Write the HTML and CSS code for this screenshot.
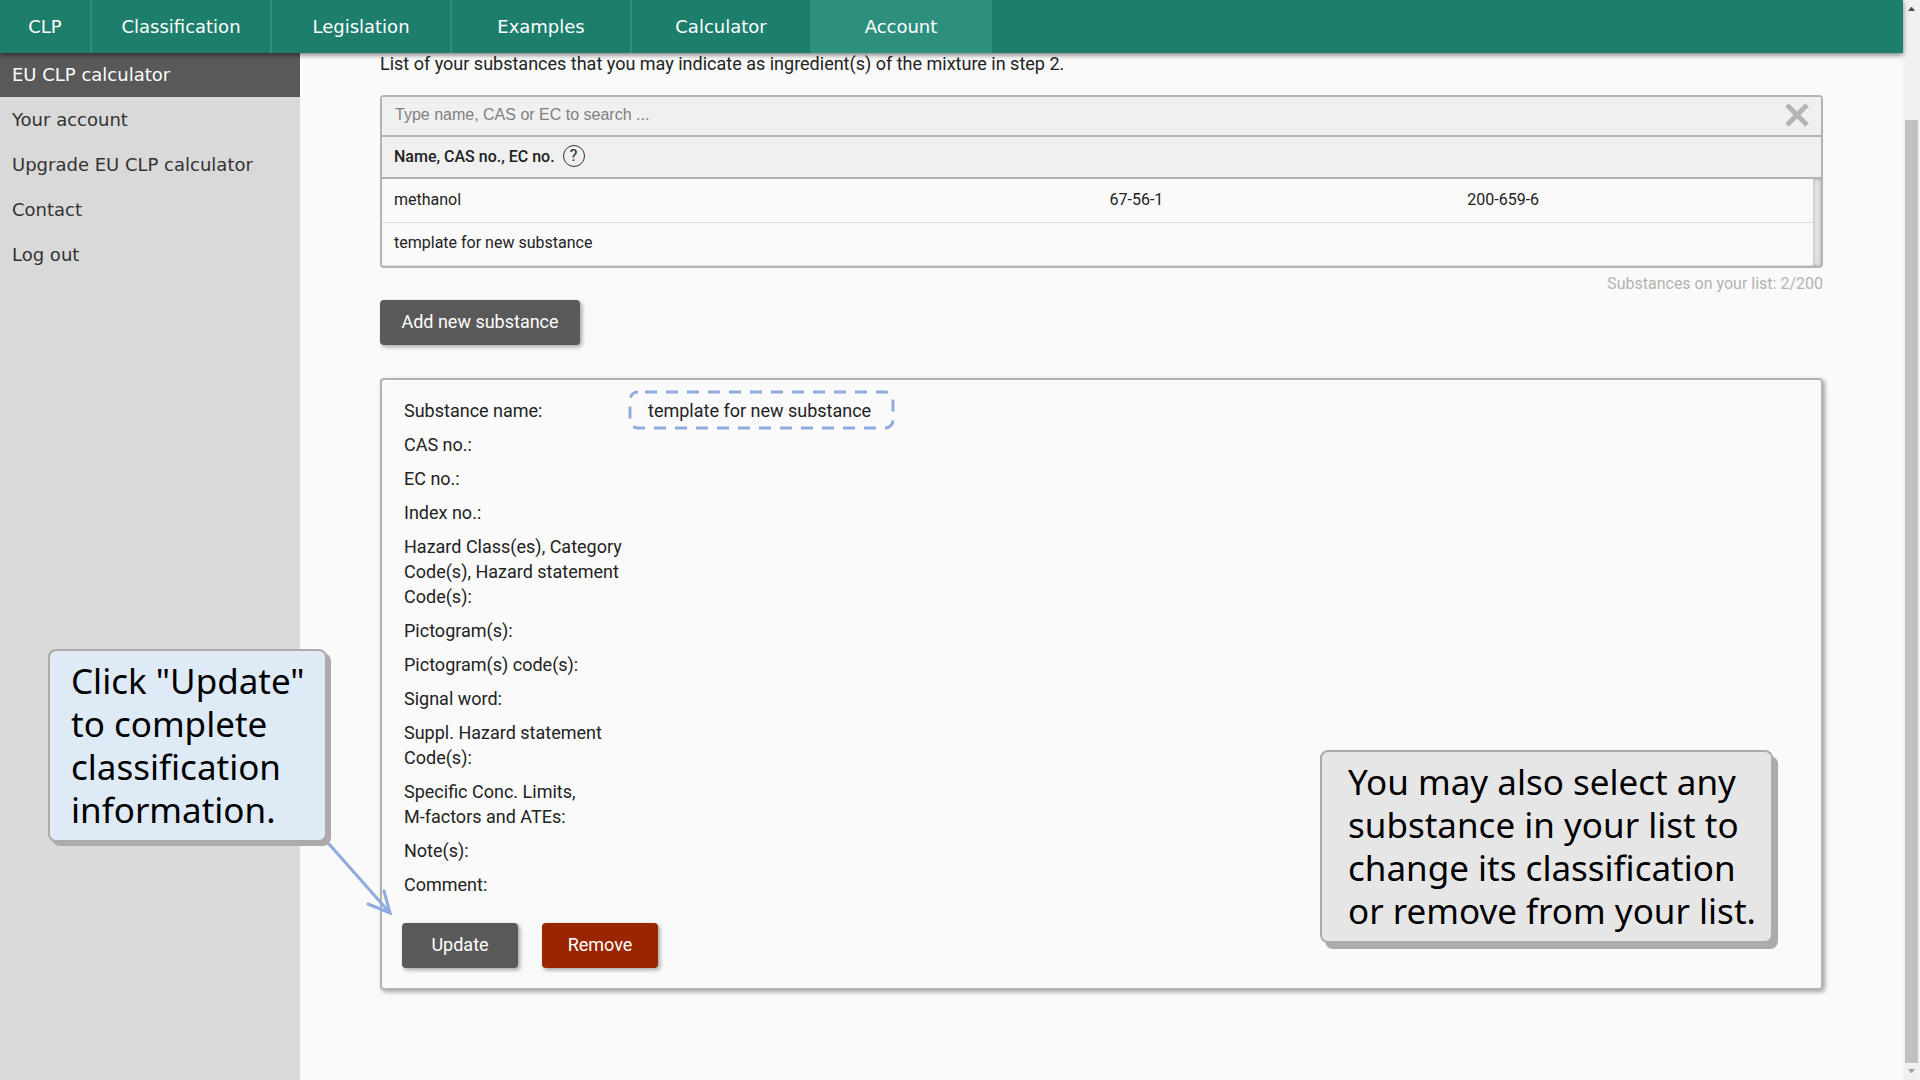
FILE: index.html
```html
<!DOCTYPE html>
<html lang="en">
<head>
<meta charset="utf-8">
<title>EU CLP calculator</title>
<link rel="stylesheet" href="styles.css">
</head>
<body>
<div class="app">
  <div class="page">
    <header class="topbar">
      <nav class="topnav" aria-label="Main">
        <a class="topnav-link topnav-short" href="#">CLP</a>
        <a class="topnav-link" href="#">Classification</a>
        <a class="topnav-link" href="#">Legislation</a>
        <a class="topnav-link" href="#">Examples</a>
        <a class="topnav-link" href="#">Calculator</a>
        <a class="topnav-link is-active" href="#" aria-current="page">Account</a>
      </nav>
    </header>
    <div class="content">
      <nav class="sidebar" aria-label="Account">
        <a class="side-link is-active" href="#">EU CLP calculator</a>
        <a class="side-link" href="#">Your account</a>
        <a class="side-link" href="#">Upgrade EU CLP calculator</a>
        <a class="side-link" href="#">Contact</a>
        <a class="side-link" href="#">Log out</a>
      </nav>
      <main class="main">
        <p class="intro">List of your substances that you may indicate as ingredient(s) of the mixture in step 2.</p>
        <section class="finder">
          <div class="search">
            <input class="search-input" type="text" placeholder="Type name, CAS or EC to search ..." aria-label="Search substances">
            <button class="clear" type="button" aria-label="Clear search">
              <svg width="24" height="24" viewBox="0 0 24 24"><path d="M2 2L22 22M22 2L2 22" stroke="#b5b5b5" stroke-width="5" fill="none"/></svg>
            </button>
          </div>
          <div class="finder-head">
            <span>Name, CAS no., EC no.</span>
            <button class="help" type="button" aria-label="Help">?</button>
          </div>
          <div class="finder-body">
            <table class="substances">
              <tbody>
                <tr><td class="col-name">methanol</td><td>67-56-1</td><td>200-659-6</td></tr>
                <tr><td class="col-name">template for new substance</td><td></td><td></td></tr>
              </tbody>
            </table>
            <div class="track"></div>
          </div>
        </section>
        <p class="count">Substances on your list: 2/200</p>
        <button class="btn btn-add" type="button">Add new substance</button>

        <section class="panel">
          <dl class="details">
            <dt>Substance name:</dt>
            <dd><span class="marked">template for new substance
              <svg class="marker" width="267" height="40" viewBox="0 0 267 40"><rect x="2" y="2" width="263" height="36" rx="8" fill="none" stroke="#8faadc" stroke-width="3" stroke-dasharray="12 9" stroke-dashoffset="14"/></svg>
            </span></dd>
            <dt>CAS no.:</dt><dd></dd>
            <dt>EC no.:</dt><dd></dd>
            <dt>Index no.:</dt><dd></dd>
            <dt>Hazard Class(es), Category Code(s), Hazard statement Code(s):</dt><dd></dd>
            <dt>Pictogram(s):</dt><dd></dd>
            <dt>Pictogram(s) code(s):</dt><dd></dd>
            <dt>Signal word:</dt><dd></dd>
            <dt>Suppl. Hazard statement Code(s):</dt><dd></dd>
            <dt>Specific Conc. Limits, <br>M-factors and ATEs:</dt><dd></dd>
            <dt>Note(s):</dt><dd></dd>
            <dt>Comment:</dt><dd></dd>
          </dl>
          <div class="actions">
            <button class="btn btn-action" type="button">Update</button>
            <button class="btn btn-action btn-danger" type="button">Remove</button>
          </div>
          <svg class="arrow" width="68" height="76" viewBox="0 0 68 76"><path d="M2 2L63 71M41 62L63 71L57 49" fill="none" stroke="#8faadc" stroke-width="3" stroke-linecap="round"/></svg>
          <aside class="callout callout-update">Click "Update"<br>to complete<br>classification<br>information.</aside>
          <aside class="callout callout-select">You may also select any<br>substance in your list to<br>change its classification<br>or remove from your list.</aside>
        </section>
      </main>
    </div>
  </div>
  <div class="scrollbar" aria-hidden="true">
    <svg width="17" height="17" viewBox="0 0 17 17"><path d="M5 11L8 7H9L12 11Z" fill="#505050"/></svg>
    <div class="thumb"></div>
    <svg width="17" height="17" viewBox="0 0 17 17"><path d="M5 6L8 10H9L12 6Z" fill="#a3a3a3"/></svg>
  </div>
</div>
</body>
</html>
```
FILE: styles.css
```css
* { box-sizing: border-box; }

body {
  margin: 0;
  background: #fafafa;
  color: #222;
  font: 18px/25px Roboto, sans-serif;
}

.app {
  display: grid;
  grid-template-columns: 1fr 17px;
  min-height: 100vh;
}

.page {
  display: flex;
  flex-direction: column;
}

/* Top bar */
.topbar {
  position: sticky;
  top: 0;
  z-index: 2;
  background: #1c7e6b;
  box-shadow: 0 2px 5px rgba(0, 0, 0, 0.5);
}

.topnav { display: flex; }

.topnav-link {
  width: 180px;
  border-right: 2px solid #2d907d;
  color: #fff;
  font-family: "DejaVu Sans", sans-serif;
  line-height: 53px;
  text-align: center;
  text-decoration: none;
}

.topnav-short { width: 92px; }
.topnav-link.is-active { background: #2d907d; }

/* Columns */
.content {
  display: grid;
  grid-template-columns: 300px 1fr;
  flex: 1;
}

.sidebar { background: #d9d9d9; }

.side-link {
  display: block;
  padding: 0 12px;
  color: #333;
  font-family: "DejaVu Sans", sans-serif;
  line-height: 45px;
  text-decoration: none;
}

.side-link.is-active {
  background: #595959;
  color: #fff;
  line-height: 44px;
}

.main { padding: 0 80px 80px; }

.intro {
  margin: 0 0 20px;
  line-height: 22px;
}

/* Substance list */
.finder {
  border: 2px solid #b3b3b3;
  border-radius: 4px;
  font-size: 16px;
}

.search {
  display: flex;
  align-items: center;
  height: 40px;
  padding-bottom: 2px;
  border-bottom: 2px solid #b3b3b3;
  background: #f0f0f0;
}

.search-input {
  flex: 1;
  padding: 0 13px;
  border: 0;
  background: none;
  color: #222;
  font: 16px/24px "Liberation Sans", Arial, sans-serif;
}

.search-input::placeholder { color: #808080; }

.clear {
  display: flex;
  margin-right: 12px;
  padding: 0;
  border: 0;
  background: none;
}

.finder-head {
  display: flex;
  align-items: center;
  gap: 8px;
  height: 42px;
  padding: 0 12px 2px;
  border-bottom: 2px solid #b3b3b3;
  background: #f0f0f0;
  font-weight: 500;
}

.help {
  width: 22px;
  height: 22px;
  padding: 0;
  border: 1px solid #333;
  border-radius: 50%;
  background: none;
  color: #222;
  font: 16px/20px Roboto, sans-serif;
}

.finder-body { display: flex; }

.substances {
  flex: 1;
  width: 100%;
  border-collapse: collapse;
  table-layout: fixed;
}

.substances td {
  height: 43px;
  padding: 0 12px 2px;
  border-bottom: 1px solid #ddd;
}

.substances .col-name { width: 50%; }

.track {
  flex: none;
  width: 8px;
  background: #e8e8e8;
  box-shadow: inset 0 0 4px rgba(0, 0, 0, 0.3);
}

.count {
  margin: 4px 0;
  color: #b3b3b3;
  font-size: 16px;
  line-height: 24px;
  text-align: right;
}

/* Buttons */
.btn {
  height: 45px;
  padding: 0 0 2px;
  border: 0;
  border-radius: 4px;
  background: #595959;
  box-shadow: 2px 2px 4px rgba(0, 0, 0, 0.35);
  color: #fff;
  font: 18px/25px Roboto, sans-serif;
}

.btn-add { display: block; width: 200px; }
.btn-action { width: 116px; }
.btn-danger { background: #992600; }

/* Selected substance */
.panel {
  position: relative;
  margin-top: 33px;
  padding: 18px 20px 20px;
  border: 2px solid #b3b3b3;
  border-radius: 4px;
  box-shadow: 2px 2px 4px rgba(0, 0, 0, 0.35);
}

.details {
  display: grid;
  grid-template-columns: 224px 1fr;
  column-gap: 20px;
  row-gap: 9px;
  margin: 0 2px;
}

.details dd { margin: 0; }

.marked { position: relative; }

.marker {
  position: absolute;
  top: -10px;
  left: -20px;
}

.actions {
  display: flex;
  gap: 24px;
  margin-top: 26px;
}

/* Notes laid over the page */
.callout {
  position: absolute;
  border: 2px solid #aeaaaa;
  border-radius: 8px;
  color: #000;
  font: 35px/43px "Trebuchet MS", "Noto Sans", sans-serif;
}

.callout-update {
  bottom: 146px;
  left: -334px;
  width: 279px;
  padding: 8px 0 9px 21px;
  background: #deeaf6;
  box-shadow: 4px 4px 0 #aeaaaa;
}

.callout-select {
  right: 48px;
  bottom: 45px;
  width: 453px;
  padding: 8px 0 9px 26px;
  background: #e7e6e6;
  box-shadow: 5px 6px 0 #aeaaaa;
}

.arrow {
  position: absolute;
  bottom: 70px;
  left: -55px;
}

/* Page scrollbar */
.scrollbar {
  display: flex;
  flex-direction: column;
  background: #f1f1f1;
}

.thumb {
  flex: 1;
  margin: 103px 2px 0;
  background: #c1c1c1;
}
```
